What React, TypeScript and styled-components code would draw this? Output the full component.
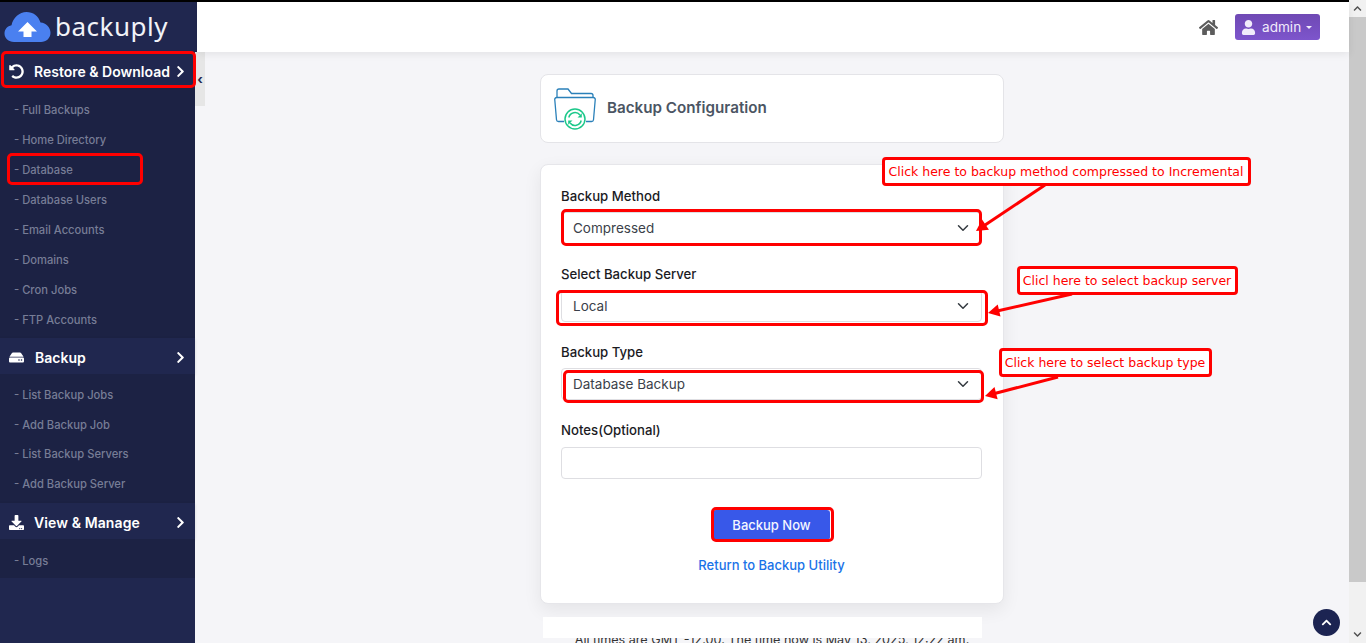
import React from 'react';
import styled, { createGlobalStyle } from 'styled-components';
import {
  FaChevronDown,
  FaChevronRight,
  FaChevronUp,
  FaDownload,
  FaHdd,
  FaHome,
  FaUndoAlt,
  FaUser
} from 'react-icons/fa';

const UI_FONT = `Inter, "Noto Sans", "Liberation Sans", sans-serif`;
const RED = '#ff0000';

const GlobalStyle = createGlobalStyle`
  html, body {
    margin: 0;
    height: 100%;
    overflow: hidden;
    background: #f5f5f8;
  }
  * {
    box-sizing: border-box;
  }
`;

const Page = styled.div`
  position: relative;
  display: flex;
  width: 1366px;
  height: 643px;
  overflow: hidden;
  font-family: ${UI_FONT};
`;

const Shell = styled.div`
  display: flex;
  flex-direction: column;
  width: 1349px;
  height: 643px;
  border-top: 2px solid #000;
`;

const TopRow = styled.div`
  display: flex;
  flex: none;
  height: 50px;
`;

const LogoBox = styled.div`
  display: flex;
  align-items: center;
  gap: 4px;
  width: 197px;
  padding: 0 0 0 4px;
  background: #20274f;
`;

const LogoText = styled.span`
  padding-bottom: 3px;
  font-family: 'Noto Sans', sans-serif;
  font-size: 26px;
  letter-spacing: 0.5px;
  color: #f1f3f8;
`;

const Header = styled.header`
  flex: 1;
  display: flex;
  align-items: center;
  justify-content: flex-end;
  gap: 17px;
  padding-right: 29px;
  background: #fff;
  box-shadow: 0 2px 8px rgba(0, 0, 0, 0.08);
  position: relative;
  z-index: 1;
`;

const HomeLink = styled.a`
  display: flex;
  color: #5c5c5c;
  font-size: 19px;
`;

const AdminButton = styled.button`
  display: flex;
  align-items: center;
  gap: 6px;
  width: 85px;
  height: 26px;
  padding: 0 0 0 6px;
  border: 0;
  border-radius: 3px;
  background: linear-gradient(180deg, #6f49b4, #7d55cc);
  color: #f1ecfb;
  font-family: ${UI_FONT};
  font-size: 13.6px;
`;

const Caret = styled.span`
  width: 0;
  height: 0;
  margin-left: -1px;
  border-left: 3px solid transparent;
  border-right: 3px solid transparent;
  border-top: 3px solid #f1ecfb;
`;

const BodyRow = styled.div`
  flex: 1;
  display: flex;
  min-height: 0;
`;

const Nav = styled.nav`
  flex: none;
  width: 195px;
  background: #20274f;
`;

const NavHead = styled.div`
  display: flex;
  align-items: center;
  height: 36px;
  padding: ${(p) => p.$nudge}px 9px 0;
  background: #20274f;
  color: #fff;
  font-size: 14px;
  font-weight: 600;
  box-shadow: 0 1px 3px rgba(0, 0, 0, 0.12);

  & > svg:first-child {
    flex: none;
    width: 15px;
    height: 15px;
  }
  & > svg:last-child {
    margin-left: auto;
    width: 11px;
    height: 13px;
  }
`;

const NavHeadLabel = styled.span`
  margin-left: ${(p) => p.$indent}px;
  letter-spacing: ${(p) => p.$tracking}px;
`;

const SubList = styled.ul`
  margin: 0;
  padding: 7px 0 ${(p) => p.$bottom}px 14px;
  list-style: none;
  background: #1c2244;
`;

const SubItem = styled.li`
  height: ${(p) => p.$row}px;
  line-height: ${(p) => p.$row}px;
  font-size: 11.2px;
  font-weight: 500;
  color: #777d96;
`;

const CollapseTab = styled.div`
  flex: none;
  width: 10px;
  height: 54px;
  background: #e6e6e6;
  color: #20274f;
  font-size: 13px;
  font-weight: 700;
  line-height: 54px;
  text-align: center;
`;

const Main = styled.main`
  flex: 1;
  display: flex;
  flex-direction: column;
  align-items: center;
  min-width: 0;
  margin-left: -10px;
  padding-top: 22px;
`;

const TitleCard = styled.section`
  display: flex;
  align-items: center;
  gap: 9px;
  flex: none;
  width: 464px;
  height: 69px;
  padding: 0 0 0 13px;
  background: #fff;
  border: 1px solid #e4e4e8;
  border-radius: 8px;
`;

const Title = styled.h1`
  margin: 0 0 2px;
  font-size: 15.2px;
  font-weight: 600;
  color: #4b5563;
`;

const FormCard = styled.section`
  flex: none;
  width: 464px;
  margin-top: 21px;
  padding: 21px 21px 28px 20px;
  background: #fff;
  border: 1px solid #e6e6ea;
  border-radius: 8px;
  box-shadow: 0 6px 18px rgba(0, 0, 0, 0.07);
`;

const Field = styled.div`
  margin-bottom: 20px;
`;

const Label = styled.label`
  display: block;
  margin-bottom: ${(p) => p.$gap}px;
  font-size: 13.2px;
  font-weight: 500;
  line-height: 20px;
  color: #1b1b1f;
`;

const SelectBox = styled.div`
  display: flex;
  align-items: center;
  justify-content: space-between;
  height: 32px;
  padding: 0 12px 0 11px;
  background: #fff;
  border: 1px solid #dedee2;
  border-radius: 4px;
  font-size: 13.5px;
  color: #3b3f4a;
`;

const TextBox = styled.input`
  display: block;
  width: 100%;
  height: 32px;
  border: 1px solid #dedee2;
  border-radius: 4px;
  background: #fff;
`;

const Actions = styled.div`
  display: flex;
  flex-direction: column;
  align-items: center;
  margin-top: 31px;
`;

const PrimaryButton = styled.button`
  width: 117px;
  height: 30px;
  border: 0;
  border-radius: 3px;
  background: #3858e9;
  color: #f3f5ff;
  font-family: ${UI_FONT};
  font-size: 13px;
  font-weight: 500;
`;

const ReturnLink = styled.a`
  margin-top: 15px;
  font-size: 13px;
  font-weight: 500;
  line-height: 20px;
  color: #1a73e8;
`;

const Footer = styled.footer`
  position: relative;
  flex: none;
  width: 439px;
  margin-top: 13px;
  padding-top: 13px;
  font-size: 12.6px;
  line-height: 20px;
  text-align: center;
  color: #333;
  white-space: nowrap;
`;

const FooterCover = styled.div`
  position: absolute;
  top: 0;
  left: -10px;
  right: 10px;
  height: 21px;
  background: #fff;
`;

const Scrollbar = styled.aside`
  flex: none;
  display: flex;
  flex-direction: column;
  align-items: center;
  width: 17px;
  height: 643px;
  background: #f1f1f1;
  color: #505050;
`;

const ScrollArrow = styled.div`
  flex: none;
  display: flex;
  align-items: center;
  justify-content: center;
  width: 17px;
  height: 17px;
  font-size: 9px;
`;

const ScrollTrack = styled.div`
  flex: 1;
  width: 17px;
`;

const ScrollThumb = styled.div`
  width: 17px;
  height: 565px;
  background: #c9c9c9;
`;

const BackToTop = styled.div`
  position: absolute;
  left: 1313px;
  top: 609px;
  display: flex;
  align-items: center;
  justify-content: center;
  width: 27px;
  height: 27px;
  border-radius: 50%;
  background: #1c2452;
  color: #fff;
  font-size: 11px;
`;

const Highlight = styled.div`
  position: absolute;
  left: ${(p) => p.$x}px;
  top: ${(p) => p.$y}px;
  width: ${(p) => p.$w}px;
  height: ${(p) => p.$h}px;
  border: 3px solid ${RED};
  border-radius: 5px;
  pointer-events: none;
`;

const Callout = styled.div`
  position: absolute;
  left: ${(p) => p.$x}px;
  top: ${(p) => p.$y}px;
  width: ${(p) => p.$w}px;
  height: ${(p) => p.$h}px;
  padding-right: 1px;
  border: 3px solid ${RED};
  border-radius: 4px;
  background: #fff;
  color: ${RED};
  font-family: 'DejaVu Sans', sans-serif;
  font-size: 12.5px;
  line-height: ${(p) => p.$h - 6}px;
  text-align: center;
  white-space: nowrap;
`;

const ArrowLayer = styled.svg`
  position: absolute;
  left: 0;
  top: 0;
  pointer-events: none;
`;

const CloudLogo = () => (
  <svg width="47" height="32" viewBox="0 0 47 32">
    <path
      fill="#4a80f0"
      d="M10 31C4.5 31 .5 27 .5 22.5c0-4.200 3-7.500 7-8.300C9 6.500 15.500 1 22.500 1c6.500 0 12 4 14 10.500 5.500.5 10 5 10 10.200 0 5.300-4.300 9.300-9.500 9.300z"
    />
    <path fill="#fff" d="M23.500 11 14 20.500h5.500V26h8v-5.500H33z" />
  </svg>
);

const FolderIcon = () => (
  <svg width="44" height="42" viewBox="0 0 44 42" fill="none">
    <path
      stroke="#2a80b9"
      strokeWidth="1.300"
      d="M3 9V3a2 2 0 0 1 2-2h9l3.500 4.500H37a2 2 0 0 1 2 2V10"
    />
    <path
      stroke="#2a80b9"
      strokeWidth="1.300"
      d="M10 33.500H4.500a2 2 0 0 1-2-1.800L.8 12a2 2 0 0 1 2-2.500h36.400a2 2 0 0 1 2 2.500l-1.700 19.700a2 2 0 0 1-2 1.800H32"
    />
    <circle cx="21" cy="31" r="10" fill="#fff" stroke="#1cc88a" strokeWidth="1.500" />
    <path
      stroke="#1cc88a"
      strokeWidth="1.500"
      d="M14.800 29.500a6.400 6.400 0 0 1 11.200-2.500M27.200 32.500a6.400 6.400 0 0 1-11.200 2.500"
    />
    <path fill="#1cc88a" d="M27.800 25.200v4.300h-4.300zM14.200 36.800v-4.300h4.300z" />
  </svg>
);

const SelectChevron = () => (
  <svg width="12" height="12" viewBox="0 0 16 16" fill="none">
    <path stroke="#343a40" strokeWidth="2" strokeLinecap="round" strokeLinejoin="round" d="m2 5 6 6 6-6" />
  </svg>
);

const Arrow = ({ x1, y1, x2, y2 }: { x1: number; y1: number; x2: number; y2: number }) => {
  const angle = Math.atan2(y2 - y1, x2 - x1);
  const head = 13;
  const spread = 0.5;
  const ax = x2 - head * Math.cos(angle - spread);
  const ay = y2 - head * Math.sin(angle - spread);
  const bx = x2 - head * Math.cos(angle + spread);
  const by = y2 - head * Math.sin(angle + spread);
  return (
    <g>
      <line x1={x1} y1={y1} x2={x2 - 6 * Math.cos(angle)} y2={y2 - 6 * Math.sin(angle)} stroke={RED} strokeWidth="3" />
      <polygon points={`${x2},${y2} ${ax},${ay} ${bx},${by}`} fill={RED} />
    </g>
  );
};

const navGroups = [
  {
    icon: <FaUndoAlt />,
    label: 'Restore & Download',
    indent: 10,
    tracking: 0,
    nudge: 3,
    row: 30,
    bottom: 3,
    items: [
      'Full Backups',
      'Home Directory',
      'Database',
      'Database Users',
      'Email Accounts',
      'Domains',
      'Cron Jobs',
      'FTP Accounts'
    ]
  },
  {
    icon: <FaHdd />,
    label: 'Backup',
    indent: 11,
    tracking: 0,
    nudge: 2,
    row: 29.67,
    bottom: 3,
    items: ['List Backup Jobs', 'Add Backup Job', 'List Backup Servers', 'Add Backup Server']
  },
  {
    icon: <FaDownload />,
    label: 'View & Manage',
    indent: 10,
    tracking: 0.1,
    nudge: 4,
    row: 30,
    bottom: 2,
    items: ['Logs']
  }
];

const fields = [
  { label: 'Backup Method', value: 'Compressed' },
  { label: 'Select Backup Server', value: 'Local' },
  { label: 'Backup Type', value: 'Database Backup' }
];

export default function App() {
  return (
    <Page>
      <GlobalStyle />
      <Shell>
        <TopRow>
          <LogoBox>
            <CloudLogo />
            <LogoText>backuply</LogoText>
          </LogoBox>
          <Header>
            <HomeLink>
              <FaHome />
            </HomeLink>
            <AdminButton>
              <FaUser size={15} />
              admin
              <Caret />
            </AdminButton>
          </Header>
        </TopRow>
        <BodyRow>
          <Nav>
            {navGroups.map((group) => (
              <div key={group.label}>
                <NavHead $nudge={group.nudge}>
                  {group.icon}
                  <NavHeadLabel $indent={group.indent} $tracking={group.tracking}>
                    {group.label}
                  </NavHeadLabel>
                  <FaChevronRight />
                </NavHead>
                <SubList $bottom={group.bottom}>
                  {group.items.map((item) => (
                    <SubItem key={item} $row={group.row}>
                      - {item}
                    </SubItem>
                  ))}
                </SubList>
              </div>
            ))}
          </Nav>
          <CollapseTab>‹</CollapseTab>
          <Main>
            <TitleCard>
              <FolderIcon />
              <Title>Backup Configuration</Title>
            </TitleCard>
            <FormCard>
              {fields.map((field) => (
                <Field key={field.label}>
                  <Label $gap={6}>{field.label}</Label>
                  <SelectBox>
                    {field.value}
                    <SelectChevron />
                  </SelectBox>
                </Field>
              ))}
              <Field>
                <Label $gap={7}>Notes(Optional)</Label>
                <TextBox />
              </Field>
              <Actions>
                <PrimaryButton>Backup Now</PrimaryButton>
                <ReturnLink>Return to Backup Utility</ReturnLink>
              </Actions>
            </FormCard>
            <Footer>
              All times are GMT -12.00. The time now is May 13, 2025, 12:22 am.
              <FooterCover />
            </Footer>
          </Main>
        </BodyRow>
      </Shell>
      <Scrollbar>
        <ScrollArrow>
          <FaChevronUp />
        </ScrollArrow>
        <ScrollThumb />
        <ScrollTrack />
        <ScrollArrow>
          <FaChevronDown />
        </ScrollArrow>
      </Scrollbar>
      <BackToTop>
        <FaChevronUp />
      </BackToTop>

      <Highlight $x={1} $y={51} $w={195} $h={37} />
      <Highlight $x={7} $y={153} $w={136} $h={32} />
      <Highlight $x={561} $y={209} $w={421} $h={37} />
      <Highlight $x={556} $y={290} $w={432} $h={36} />
      <Highlight $x={563} $y={370} $w={421} $h={33} />
      <Highlight $x={711} $y={507} $w={123} $h={35} />

      <ArrowLayer width="1366" height="643">
        <Arrow x1={1045} y1={185} x2={976} y2={231} />
        <Arrow x1={1072} y1={294} x2={988} y2={313} />
        <Arrow x1={1058} y1={377} x2={985} y2={396} />
      </ArrowLayer>

      <Callout $x={882} $y={157} $w={369} $h={29}>
        Click here to backup method compressed to Incremental
      </Callout>
      <Callout $x={1017} $y={266} $w={221} $h={29}>
        Clicl here to select backup server
      </Callout>
      <Callout $x={999} $y={348} $w={213} $h={29}>
        Click here to select backup type
      </Callout>
    </Page>
  );
}
